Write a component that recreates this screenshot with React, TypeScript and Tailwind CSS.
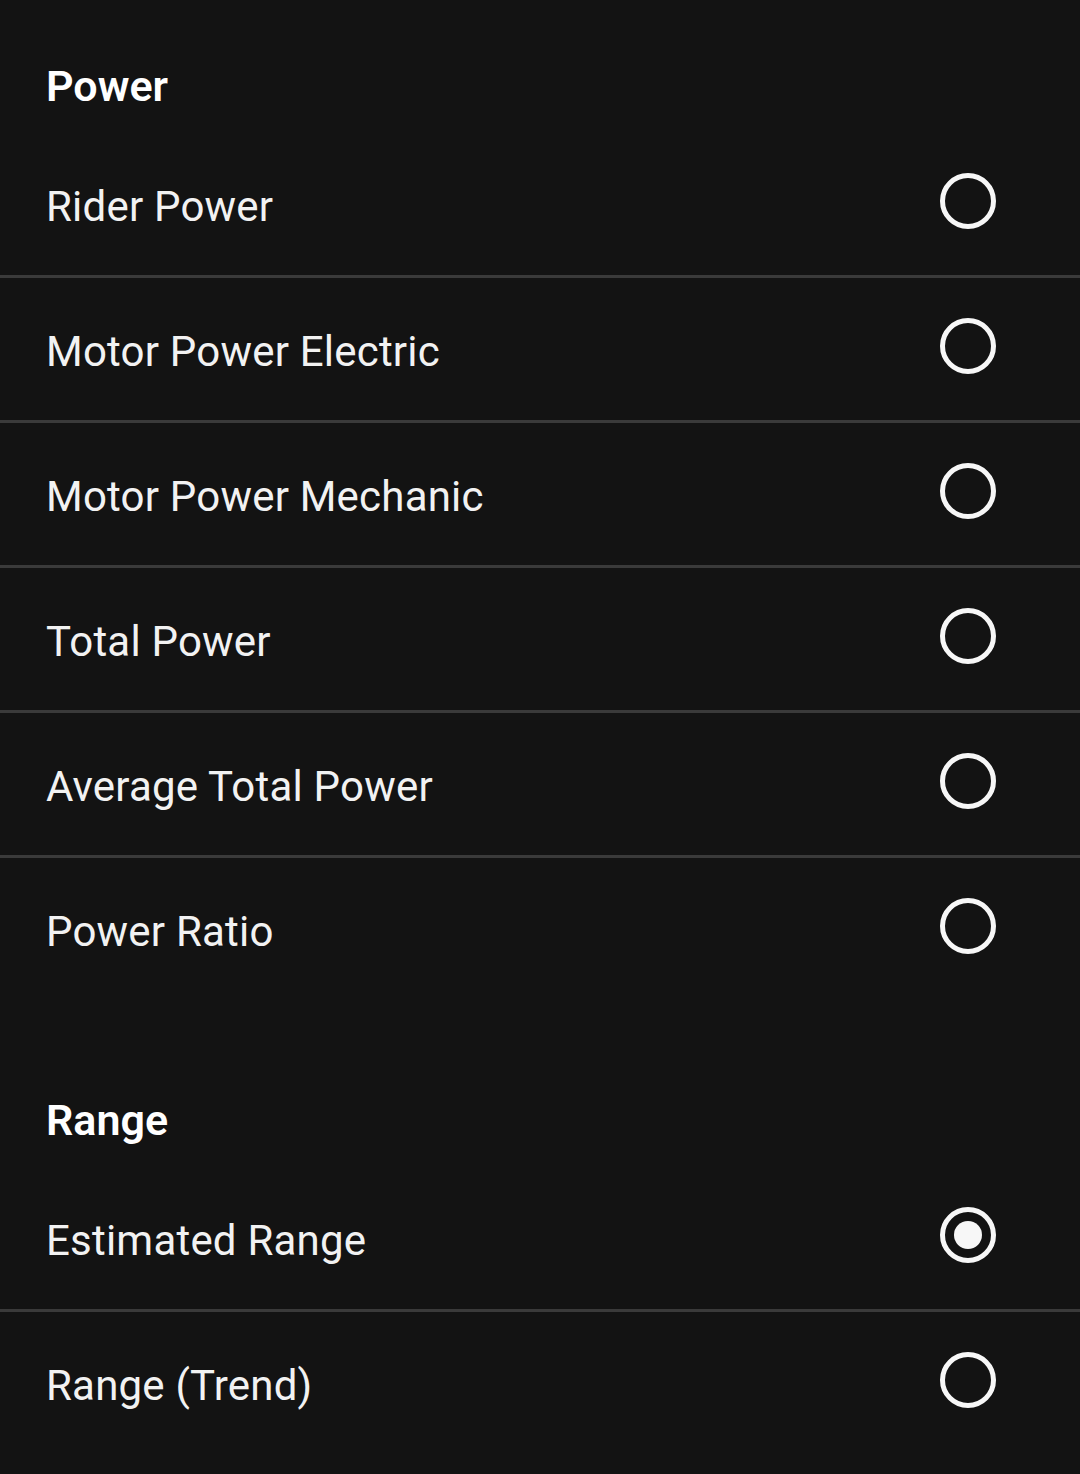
import React from "react";

interface Option {
  label: string;
  selected?: boolean;
}

interface Section {
  title: string;
  options: Option[];
}

const sections: Section[] = [
  {
    title: "Power",
    options: [
      { label: "Rider Power" },
      { label: "Motor Power Electric" },
      { label: "Motor Power Mechanic" },
      { label: "Total Power" },
      { label: "Average Total Power" },
      { label: "Power Ratio" },
    ],
  },
  {
    title: "Range",
    options: [{ label: "Estimated Range", selected: true }, { label: "Range (Trend)" }],
  },
];

function Radio({ checked }: { checked?: boolean }) {
  return (
    <div className="w-[56px] h-[56px] rounded-full border-[5px] border-[#f7f7f7] flex items-center justify-center shrink-0 -mt-[6px]">
      {checked && <div className="w-[28px] h-[28px] rounded-full bg-[#f7f7f7]" />}
    </div>
  );
}

export default function App() {
  return (
    <div
      className="min-h-[1474px] w-full bg-[#131313] text-[#f2f2f2]"
      style={{ fontFamily: "Roboto, 'Noto Sans', sans-serif" }}
    >
      {sections.map((section, si) => (
        <div key={section.title} className={si > 0 ? "mt-[34px]" : ""}>
          <div className="pt-[56px] pb-[17px] px-[46px] h-[133px] flex items-center">
            <span className="text-[43px] leading-[60px] font-semibold text-white">
              {section.title}
            </span>
          </div>
          {section.options.map((opt, i) => (
            <div key={opt.label}>
              {i > 0 && <div className="h-[3px] bg-[#3a3a3a]" />}
              <div className="h-[142px] flex items-center justify-between pl-[46px] pr-[84px]">
                <span className="pt-[5px] text-[42px] leading-none tracking-[0.005em]">{opt.label}</span>
                <Radio checked={opt.selected} />
              </div>
            </div>
          ))}
        </div>
      ))}
    </div>
  );
}
